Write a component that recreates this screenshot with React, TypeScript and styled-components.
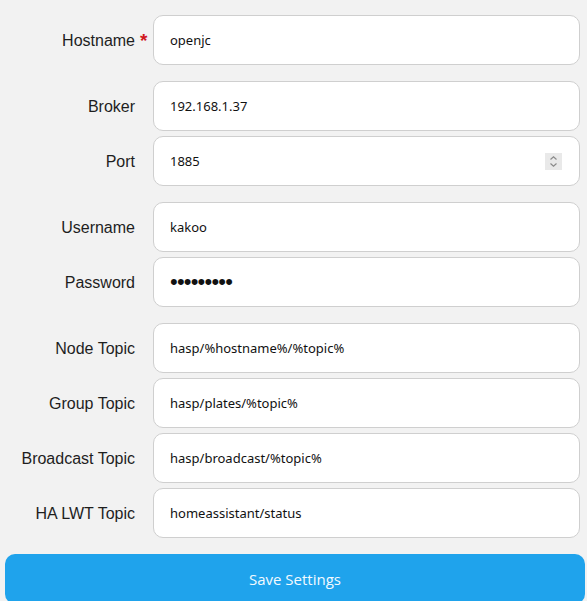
import React from "react";
import styled, { createGlobalStyle } from "styled-components";

const Global = createGlobalStyle`
  html, body { margin: 0; padding: 0; background: #f2f2f2; }
  body { font-family: "Liberation Sans", Arial, sans-serif; }
`;

const Page = styled.form`
  display: flex;
  flex-direction: column;
  gap: 16px;
  padding: 15px 2px 0 5px;
  box-sizing: border-box;
  width: 587px;
`;

const Group = styled.div`
  display: flex;
  flex-direction: column;
  gap: 5px;
`;

const Row = styled.div`
  display: grid;
  grid-template-columns: 130px 427px;
  column-gap: 18px;
  align-items: center;
`;

const Label = styled.label`
  position: relative;
  justify-self: end;
  padding-top: 2px;
  font-size: 16px;
  color: #1e1e1e;
  text-align: right;
  white-space: nowrap;
`;

const Required = styled.span`
  position: absolute;
  left: calc(100% + 5px);
  top: 0;
  color: #d0181e;
  font-size: 19px;
  font-weight: bold;
`;

const Box = styled.div`
  display: flex;
  align-items: center;
  height: 50px;
  box-sizing: border-box;
  background: #fff;
  border: 1px solid #cfcfcf;
  border-radius: 10px;
  padding: 0 17px 0 16px;
`;

const Field = styled.input<{ $secret?: boolean }>`
  flex: 1;
  min-width: 0;
  border: none;
  outline: none;
  background: transparent;
  padding: 0;
  font-family: ${(p) => (p.$secret ? `"Liberation Sans", Arial, sans-serif` : `"Noto Sans", "DejaVu Sans", sans-serif`)};
  font-size: ${(p) => (p.$secret ? "22px" : "13px")};
  letter-spacing: ${(p) => (p.$secret ? "-0.8px" : "0")};
  color: #111;
`;

const Spinner = styled.span`
  display: flex;
  flex-direction: column;
  align-items: center;
  justify-content: center;
  width: 17px;
  height: 17px;
  background: #e9e9e9;
`;

const SaveButton = styled.button`
  height: 50px;
  margin: 0;
  border: none;
  border-radius: 10px;
  background: #1fa3ec;
  color: #f2faff;
  font-family: "Open Sans", "Noto Sans", sans-serif;
  font-size: 15px;
  cursor: pointer;
`;

type F = { label: string; value: string; required?: boolean; secret?: boolean; spin?: boolean };

const groups: F[][] = [
  [{ label: "Hostname", value: "openjc", required: true }],
  [
    { label: "Broker", value: "192.168.1.37" },
    { label: "Port", value: "1885", spin: true },
  ],
  [
    { label: "Username", value: "kakoo" },
    { label: "Password", value: "kakoo1234", secret: true },
  ],
  [
    { label: "Node Topic", value: "hasp/%hostname%/%topic%" },
    { label: "Group Topic", value: "hasp/plates/%topic%" },
    { label: "Broadcast Topic", value: "hasp/broadcast/%topic%" },
    { label: "HA LWT Topic", value: "homeassistant/status" },
  ],
];

function SpinIcon() {
  return (
    <Spinner>
      <svg width="11" height="13" viewBox="0 0 11 13" fill="none" stroke="#8a8a8a" strokeWidth="1.2">
        <path d="M2.5 4.5 L5.5 1.8 L8.5 4.5" />
        <path d="M2.5 8.5 L5.5 11.2 L8.5 8.5" />
      </svg>
    </Spinner>
  );
}

export default function App() {
  return (
    <>
      <Global />
      <Page onSubmit={(e) => e.preventDefault()}>
        {groups.map((g, i) => (
          <Group key={i}>
            {g.map((f) => (
              <Row key={f.label}>
                <Label>
                  {f.label}
                  {f.required && <Required>*</Required>}
                </Label>
                <Box>
                  <Field
                    type={f.secret ? "password" : "text"}
                    defaultValue={f.value}
                    $secret={f.secret}
                  />
                  {f.spin && <SpinIcon />}
                </Box>
              </Row>
            ))}
          </Group>
        ))}
        <SaveButton type="submit">Save Settings</SaveButton>
      </Page>
    </>
  );
}
